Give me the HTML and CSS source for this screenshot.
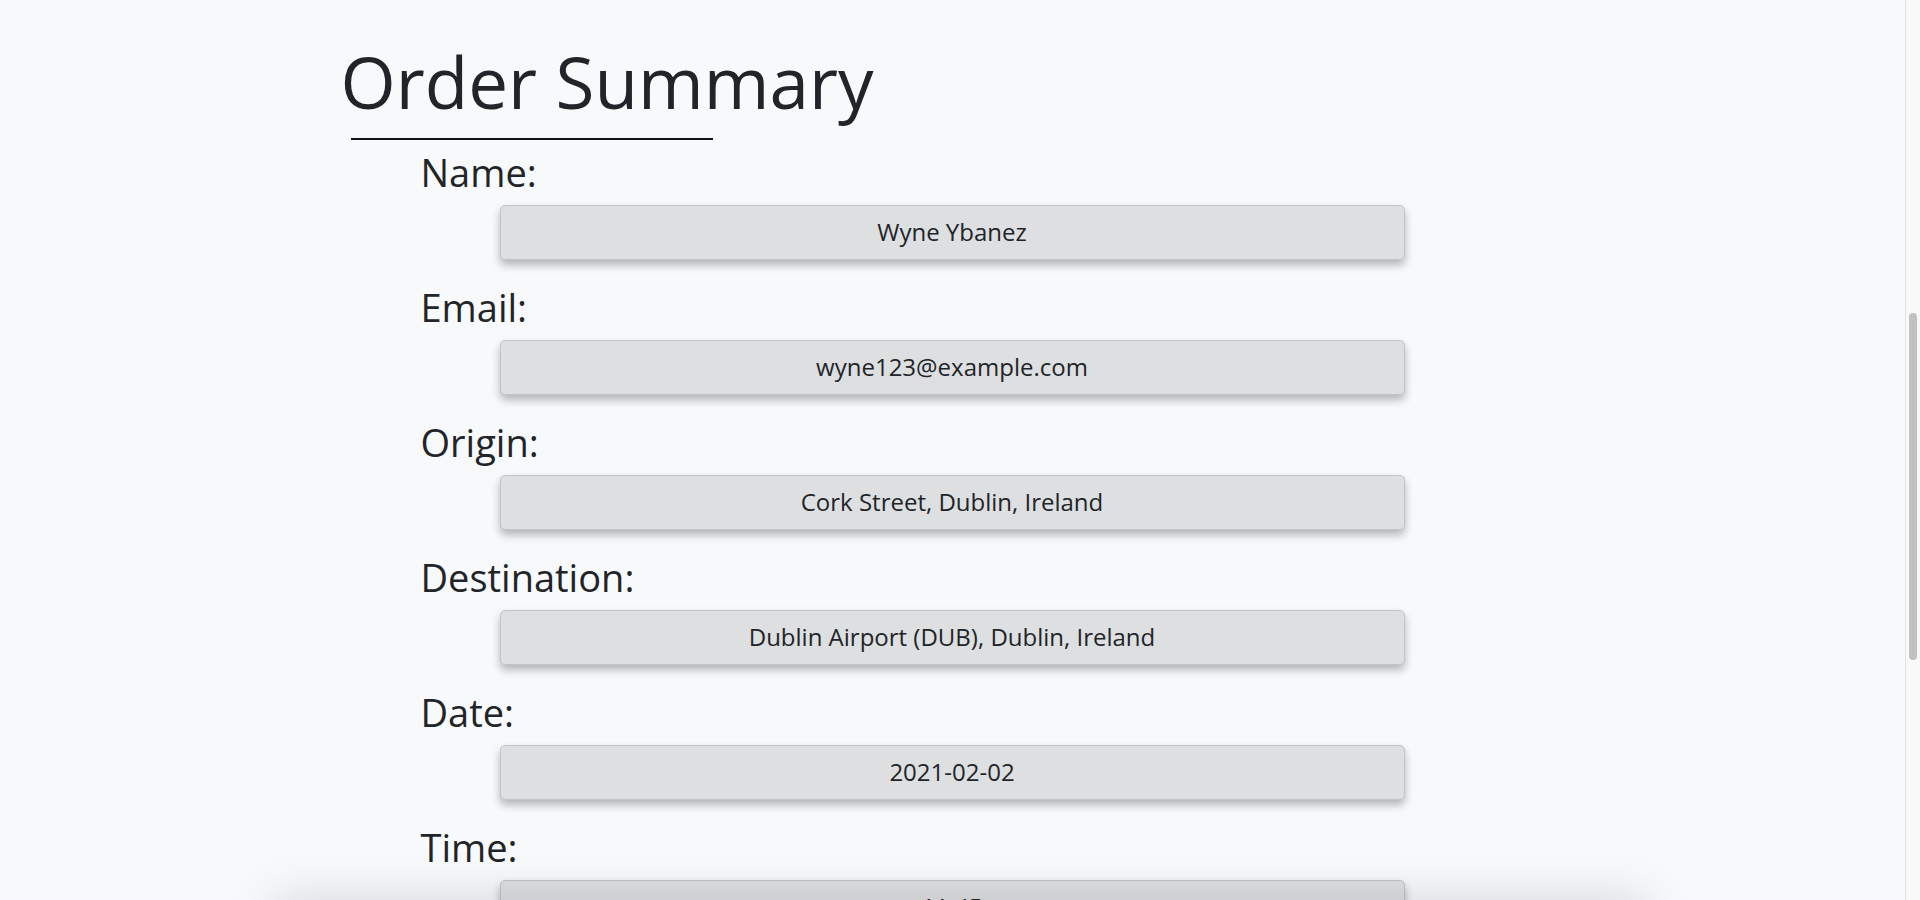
FILE: index.html
```html
<!DOCTYPE html>
<html lang="en">
<head>
<meta charset="utf-8">
<title>Order Summary</title>
<link rel="stylesheet" href="styles.css">
</head>
<body>
<main class="container">
  <h1 class="title">Order Summary</h1>
  <hr class="title-rule">
  <section class="summary">
    <div class="field">
      <h2 class="field-label">Name:</h2>
      <div class="field-value">Wyne Ybanez</div>
    </div>
    <div class="field">
      <h2 class="field-label">Email:</h2>
      <div class="field-value">wyne123@example.com</div>
    </div>
    <div class="field">
      <h2 class="field-label">Origin:</h2>
      <div class="field-value">Cork Street, Dublin, Ireland</div>
    </div>
    <div class="field">
      <h2 class="field-label">Destination:</h2>
      <div class="field-value">Dublin Airport (DUB), Dublin, Ireland</div>
    </div>
    <div class="field">
      <h2 class="field-label">Date:</h2>
      <div class="field-value">2021-02-02</div>
    </div>
    <div class="field">
      <h2 class="field-label">Time:</h2>
      <div class="field-value">11:45</div>
    </div>
  </section>
</main>
<div class="bottom-bar"></div>
<div class="scrollbar"><div class="scrollbar-thumb"></div></div>
</body>
</html>
```
FILE: styles.css
```css
body {
  margin: 0;
  padding-right: 15px;
  background: #f8f9fa;
  color: #212529;
  font-family: "Open Sans", "Noto Sans", sans-serif;
}
.container {
  width: 1320px;
  margin: 0 auto;
  padding-top: 34px;
  padding-bottom: 200px;
}
.title {
  margin: 0 0 0 48px;
  font-size: 71px;
  font-weight: 400;
  line-height: 96px;
}
.title-rule {
  margin: 8px 0 0 58px;
  width: 362px;
  border: 0;
  border-top: 2px solid #111;
  height: 0;
}
.summary {
  display: flex;
  flex-direction: column;
  margin-top: 8px;
}
.field {
  display: flex;
  flex-direction: column;
  padding-bottom: 23px;
}
.field-label {
  margin: 0 0 0 128px;
  font-size: 38px;
  font-weight: 400;
  line-height: 48px;
}
.field-value {
  margin: 9px 0 0 207px;
  width: 903px;
  height: 53px;
  background: #dedfe1;
  border: 1px solid #c3c4c6;
  border-radius: 5px;
  box-shadow: 0 5px 9px rgba(0, 0, 0, 0.28);
  text-align: center;
  font-size: 24px;
  line-height: 52px;
}
.bottom-bar {
  position: fixed;
  top: 100%;
  left: 275px;
  width: 1370px;
  height: 100px;
  background: #f8f9fa;
  box-shadow: 0 0 50px rgba(0, 0, 0, 0.15);
}
.scrollbar {
  position: fixed;
  top: 0;
  right: 0;
  width: 14px;
  height: 100%;
  background: #f9f9f9;
  border-left: 1px solid #e3e3e3;
}
.scrollbar-thumb {
  position: absolute;
  top: 313px;
  left: 3px;
  width: 8px;
  height: 347px;
  border-radius: 4px;
  background: #c1c1c1;
}
```
